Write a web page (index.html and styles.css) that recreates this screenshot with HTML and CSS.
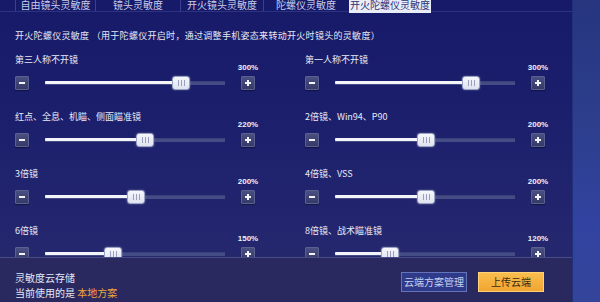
FILE: index.html
```html
<!DOCTYPE html>
<html lang="zh">
<head>
<meta charset="utf-8">
<link rel="stylesheet" href="styles.css">
</head>
<body>
<div class="screen">
  <div class="panel">
    <nav class="tabs">
      <div class="tab t1">自由镜头灵敏度</div>
      <div class="tab t2">镜头灵敏度</div>
      <div class="tab t3">开火镜头灵敏度</div>
      <div class="tab t4">陀螺仪灵敏度</div>
      <div class="tab t5 active">开火陀螺仪灵敏度</div>
    </nav>
    <p class="desc">开火陀螺仪灵敏度 （用于陀螺仪开启时，通过调整手机姿态来转动开火时镜头的灵敏度）</p>
    <div class="list">
      <div class="item">
        <div class="label">第三人称不开镜</div>
        <div class="controls">
          <div class="btn minus"></div>
          <div class="track"><div class="fill" style="width:75.5%"><div class="thumb"></div></div></div>
          <div class="pluscol"><span class="pct">300%</span><div class="btn plus"></div></div>
        </div>
      </div>
      <div class="item">
        <div class="label">第一人称不开镜</div>
        <div class="controls">
          <div class="btn minus"></div>
          <div class="track"><div class="fill" style="width:75.5%"><div class="thumb"></div></div></div>
          <div class="pluscol"><span class="pct">300%</span><div class="btn plus"></div></div>
        </div>
      </div>
      <div class="item">
        <div class="label">红点、全息、机瞄、侧面瞄准镜</div>
        <div class="controls">
          <div class="btn minus"></div>
          <div class="track"><div class="fill" style="width:55.5%"><div class="thumb"></div></div></div>
          <div class="pluscol"><span class="pct">220%</span><div class="btn plus"></div></div>
        </div>
      </div>
      <div class="item">
        <div class="label">2倍镜、Win94、P90</div>
        <div class="controls">
          <div class="btn minus"></div>
          <div class="track"><div class="fill" style="width:50.5%"><div class="thumb"></div></div></div>
          <div class="pluscol"><span class="pct">200%</span><div class="btn plus"></div></div>
        </div>
      </div>
      <div class="item">
        <div class="label">3倍镜</div>
        <div class="controls">
          <div class="btn minus"></div>
          <div class="track"><div class="fill" style="width:50.5%"><div class="thumb"></div></div></div>
          <div class="pluscol"><span class="pct">200%</span><div class="btn plus"></div></div>
        </div>
      </div>
      <div class="item">
        <div class="label">4倍镜、VSS</div>
        <div class="controls">
          <div class="btn minus"></div>
          <div class="track"><div class="fill" style="width:50.5%"><div class="thumb"></div></div></div>
          <div class="pluscol"><span class="pct">200%</span><div class="btn plus"></div></div>
        </div>
      </div>
      <div class="item">
        <div class="label">6倍镜</div>
        <div class="controls">
          <div class="btn minus"></div>
          <div class="track"><div class="fill" style="width:37.7%"><div class="thumb"></div></div></div>
          <div class="pluscol"><span class="pct">150%</span><div class="btn plus"></div></div>
        </div>
      </div>
      <div class="item">
        <div class="label">8倍镜、战术瞄准镜</div>
        <div class="controls">
          <div class="btn minus"></div>
          <div class="track"><div class="fill" style="width:30.5%"><div class="thumb"></div></div></div>
          <div class="pluscol"><span class="pct">120%</span><div class="btn plus"></div></div>
        </div>
      </div>
    </div>
    <footer class="footer">
      <div class="cloud">
        <div class="cloud-title">灵敏度云存储</div>
        <div class="cloud-sub">当前使用的是 <span class="local">本地方案</span></div>
      </div>
      <div class="actions">
        <div class="abtn manage">云端方案管理</div>
        <div class="abtn upload">上传云端</div>
      </div>
    </footer>
  </div>
  <div class="strip"></div>
</div>
</body>
</html>
```

FILE: styles.css
```css
* { box-sizing: border-box; }
html, body {
  margin: 0;
  padding: 0;
  width: 600px;
  height: 302px;
  overflow: hidden;
  background: #1b1e6a;
}
body {
  font-family: "Noto Sans CJK SC", "Noto Sans", sans-serif;
  color: #e6e8f6;
}
.screen {
  display: flex;
  width: 600px;
  height: 302px;
}
.panel {
  width: 572px;
  height: 302px;
  display: flex;
  flex-direction: column;
  background: linear-gradient(180deg, #161a68 0%, #1c1f6c 40%, #24276e 80%, #28296a 100%);
}
.strip {
  flex: 1;
  background: linear-gradient(180deg, #26357e 0%, #2d3f8e 45%, #3143a0 75%, #34449a 100%);
  border-left: 1px solid #22307a;
}
.tabs {
  display: flex;
  height: 12px;
  padding-left: 15px;
  border-bottom: 1px solid #2c3380;
}
.tab {
  height: 11px;
  font-size: 10px;
  line-height: 10px;
  text-align: center;
  color: #c9cdea;
  border-left: 1px solid #3a4090;
}
.t1 { width: 80px; }
.t2 { width: 85px; }
.t3 { width: 83px; }
.t4 { width: 85px; }
.t5 { width: 82px; }
.tab.active {
  background: #e9edf8;
  color: #2a3178;
  height: 13px;
  border-left: none;
  margin-left: 1px;
}
.desc {
  margin: 18px 0 0 15px;
  font-size: 9px;
  line-height: 12px;
  letter-spacing: 0.3px;
  color: #e6e8f6;
}
.list {
  flex: 1;
  min-height: 0;
  overflow: hidden;
  padding: 12px 0 0 15px;
  display: grid;
  grid-template-columns: 290px 240px;
  grid-auto-rows: 36px;
  row-gap: 21px;
  align-content: start;
}
.item {
  display: flex;
  flex-direction: column;
}
.label {
  font-size: 9px;
  line-height: 12px;
  color: #e8eaf7;
  white-space: nowrap;
}
.controls {
  margin-top: -2px;
  display: flex;
  align-items: flex-end;
  height: 26px;
}
.btn {
  position: relative;
  width: 14px;
  height: 14px;
  flex: none;
  background: linear-gradient(180deg, #4a4f82 0%, #363a68 100%);
  border: 1px solid #5a6090;
  border-radius: 1px;
  box-shadow: 0 1px 1px rgba(0,0,0,0.4);
}
.btn::before {
  content: "";
  position: absolute;
  left: 3px;
  top: 5px;
  width: 6px;
  height: 2px;
  background: #f2f3fb;
}
.plus::after {
  content: "";
  position: absolute;
  left: 5px;
  top: 3px;
  width: 2px;
  height: 6px;
  background: #f2f3fb;
}
.track {
  position: relative;
  width: 180px;
  height: 14px;
  margin-left: 16px;
  flex: none;
}
.track::before {
  content: "";
  position: absolute;
  left: 0;
  right: 0;
  top: 5px;
  height: 3px;
  background: #444c86;
  border-top: 1px solid #3a4078;
}
.fill {
  position: absolute;
  left: 0;
  top: 5px;
  height: 3px;
  background: #f4f5fb;
  border-radius: 1px;
}
.thumb {
  position: absolute;
  right: -9px;
  top: -5px;
  width: 18px;
  height: 14px;
  border-radius: 3px;
  background: linear-gradient(180deg, #f6f7fc 0%, #dfe3f0 100%);
  border: 1px solid #9aa2c4;
  box-shadow: 0 0 2px rgba(255,255,255,0.35);
}
.thumb::before {
  content: "";
  position: absolute;
  left: 5px;
  top: 3px;
  width: 7px;
  height: 6px;
  background: repeating-linear-gradient(90deg, #9aa0bc 0 1px, transparent 1px 3px);
}
.pluscol {
  margin-left: 16px;
  width: 14px;
  display: flex;
  flex-direction: column;
  align-items: center;
}
.pct {
  font-family: "Liberation Sans", sans-serif;
  font-size: 8px;
  line-height: 8px;
  font-weight: bold;
  color: #eef0fa;
  white-space: nowrap;
  margin-bottom: 4px;
}
.footer {
  height: 45px;
  flex: none;
  border-top: 1px solid #474c88;
  background: #29295f;
  display: flex;
  align-items: flex-start;
  justify-content: space-between;
  padding: 12px 28px 0 15px;
}
.cloud {
  font-size: 10px;
  line-height: 15px;
  color: #e6e8f6;
}
.local { color: #f0a53a; }
.actions {
  display: flex;
  gap: 11px;
  margin-top: 2px;
}
.abtn {
  width: 66px;
  height: 20px;
  font-size: 10px;
  line-height: 18px;
  text-align: center;
}
.manage {
  background: #2f3b8a;
  border: 1px solid #6474b8;
  color: #c9d0f0;
}
.upload {
  background: linear-gradient(180deg, #f9bd4e 0%, #f2a533 100%);
  border: 1px solid #ffd27a;
  color: #3b2a12;
}
```
